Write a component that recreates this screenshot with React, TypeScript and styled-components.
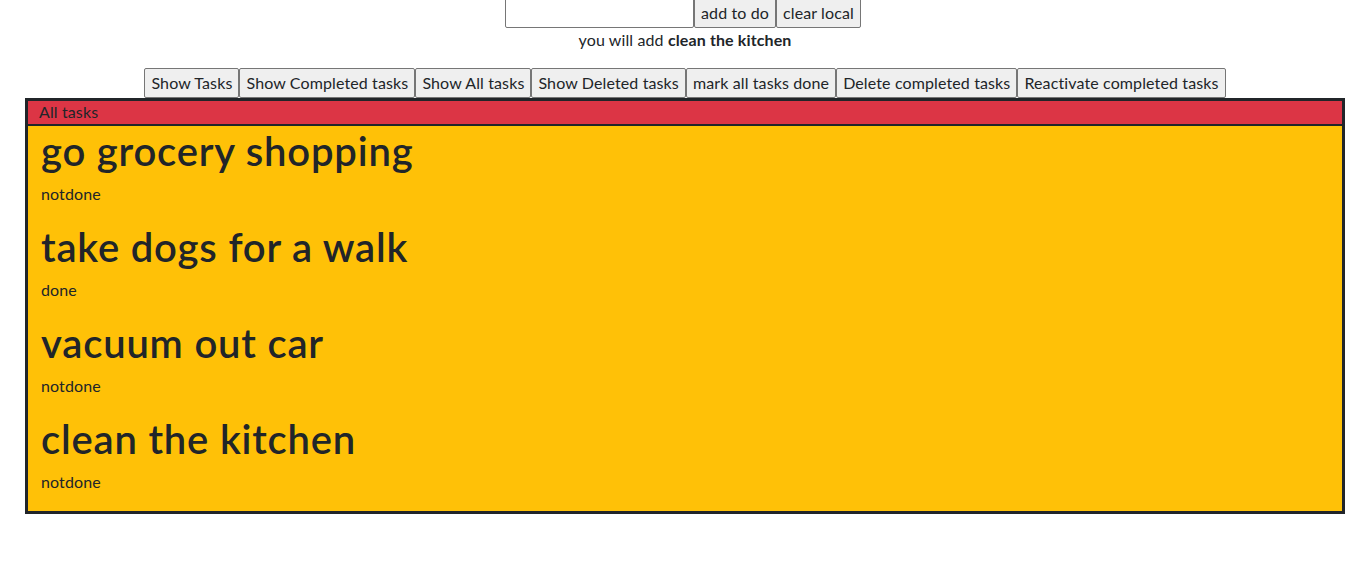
import React from "react";
import styled, { createGlobalStyle } from "styled-components";

const Global = createGlobalStyle`
  body {
    margin: 0;
    font-family: Lato, "Open Sans", sans-serif;
    font-size: 16px;
    line-height: 1.5;
    letter-spacing: 0.12px;
    color: #212529;
    background: #fff;
  }
  * { box-sizing: border-box; }
`;

const Page = styled.div`
  width: 1320px;
  margin-left: 25px;
  margin-top: -2px;
`;

const Center = styled.div`
  display: flex;
  flex-direction: column;
  align-items: center;
`;

const Row = styled.div`
  display: flex;
  justify-content: center;
`;

const TopRow = styled(Row)`
  margin-left: -4px;
`;

const Input = styled.input`
  width: 189px;
  height: 30px;
  border: 1px solid #767676;
  border-radius: 2px;
  font: inherit;
  padding: 1px 2px;
`;

const Btn = styled.button`
  font: inherit;
  letter-spacing: inherit;
  line-height: 1.5;
  height: 30px;
  padding: 1px 6px;
  background: #efefef;
  color: #212529;
  border: 1px solid #767676;
  border-radius: 2px;
`;

const Note = styled.p`
  margin: 0 0 16px;
`;

const Card = styled.div`
  border: 3px solid #212529;
  background: #ffc107;
`;

const CardHeader = styled.div`
  background: #dc3545;
  border-bottom: 2px solid #212529;
  padding: 0 11px;
  height: 25px;
  line-height: 22px;
`;

const Body = styled.div`
  padding: 1px 13px 0;
`;

const Title = styled.h1`
  font-size: 40px;
  font-weight: 600;
  line-height: 1.2;
  letter-spacing: 0.8px;
  margin: 0 0 8px;
`;

const Status = styled.p`
  margin: 0 0 16px;
  line-height: 22px;
  padding-bottom: 2px;
`;

const tasks = [
  { t: "go grocery shopping", s: "notdone" },
  { t: "take dogs for a walk", s: "done" },
  { t: "vacuum out car", s: "notdone" },
  { t: "clean the kitchen", s: "notdone" },
];

export default function App() {
  return (
    <>
      <Global />
      <Page>
        <Center>
          <TopRow>
            <Input />
            <Btn>add to do</Btn>
            <Btn>clear local</Btn>
          </TopRow>
          <Note>
            you will add <b>clean the kitchen</b>
          </Note>
          <Row>
            <Btn>Show Tasks</Btn>
            <Btn>Show Completed tasks</Btn>
            <Btn>Show All tasks</Btn>
            <Btn>Show Deleted tasks</Btn>
            <Btn>mark all tasks done</Btn>
            <Btn>Delete completed tasks</Btn>
            <Btn>Reactivate completed tasks</Btn>
          </Row>
        </Center>
        <Card>
          <CardHeader>All tasks</CardHeader>
          <Body>
            {tasks.map((x) => (
              <div key={x.t}>
                <Title>{x.t}</Title>
                <Status>{x.s}</Status>
              </div>
            ))}
          </Body>
        </Card>
      </Page>
    </>
  );
}
